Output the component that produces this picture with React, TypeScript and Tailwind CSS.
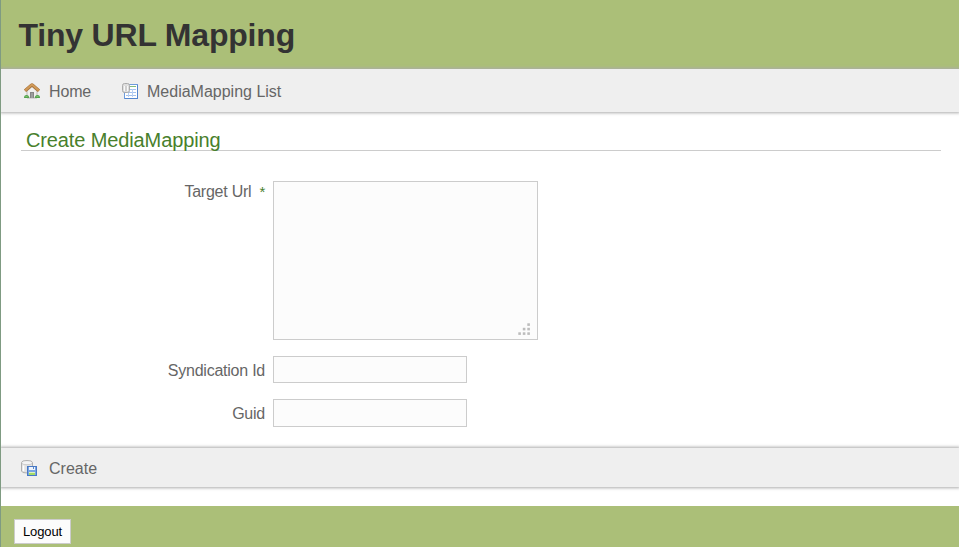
import type { ReactNode } from "react";

function HomeIcon() {
  return (
    <svg width="16" height="16" viewBox="0 0 16 16" className="mt-px shrink-0">
      <path d="M3 8L8 3.5L13 8V15H3Z" fill="#f0efed" stroke="#b0ada8" strokeWidth="0.8" />
      <rect x="6" y="9" width="4" height="6" fill="#858585" />
      <rect x="7" y="10" width="2" height="5" fill="#9d9d9d" />
      <path d="M1 7.8L7.4 2.2Q8 1.7 8.6 2.2L15 7.8" fill="none" stroke="#a8713a" strokeWidth="3.4" />
      <path d="M1.2 7.4L7.4 2Q8 1.5 8.6 2L14.8 7.4" fill="none" stroke="#d09a58" strokeWidth="2" />
      <path d="M0 15Q0 12 2.5 12Q5 12 5.3 15Z" fill="#55a34e" />
      <path d="M10.7 15Q11 12 13.5 12Q16 12 16 15Z" fill="#55a34e" />
      <path d="M1.5 13.5h2M12.5 13.5h2" stroke="#80c56e" />
    </svg>
  );
}

function TableIcon() {
  return (
    <svg width="16" height="16" viewBox="0 0 16 16" className="mt-px shrink-0">
      <rect x="2.5" y="1.5" width="13" height="14" fill="#fff" stroke="#6d9bdc" />
      <path d="M3 15.5H16M15.5 2V16" stroke="#5486cf" />
      <rect x="8" y="3" width="6" height="1" fill="#82bd7e" />
      <path d="M4 6.5H14M4 9.5H14M4 12.5H14" stroke="#a3c2ef" />
      <path d="M6.5 6V14M10.5 6V14" stroke="#b9d0f3" />
      <rect x="0.5" y="0.5" width="7" height="9" rx="2" fill="#dedede" stroke="#ababab" />
      <path d="M2.5 3V8M5.5 3V8" stroke="#f9f9f9" />
      <path d="M4 3V8" stroke="#c0c0c0" />
    </svg>
  );
}

function SaveIcon() {
  return (
    <svg width="16" height="16" viewBox="0 0 16 16" className="mt-px shrink-0">
      <path d="M0.5 2.5Q0.5 0.5 6 0.5Q11.5 0.5 11.5 2.5V11Q11.5 13 6 13Q0.5 13 0.5 11Z" fill="#e2e2e2" stroke="#b0b0b0" />
      <ellipse cx="6" cy="2.8" rx="4.8" ry="1.6" fill="#f4f4f4" />
      <path d="M1 3.5Q2 4.7 6 4.7Q10 4.7 11 3.5" fill="none" stroke="#c8c8c8" strokeWidth="0.8" />
      <path d="M2.5 5.5V11" stroke="#fff" strokeWidth="1.5" />
      <rect x="6.5" y="6.5" width="9" height="9" fill="#78a4e3" stroke="#4778c4" />
      <rect x="8" y="7" width="6" height="3" fill="#edf3fc" />
      <rect x="12" y="7" width="1" height="2" fill="#5b87c8" />
      <rect x="8" y="12" width="6" height="3" fill="#e0f1bd" />
      <rect x="8" y="13" width="6" height="2" fill="#a4dc66" />
    </svg>
  );
}

function Grip() {
  const dots = [[9, 0], [4.5, 4.5], [9, 4.5], [0, 9], [4.5, 9], [9, 9]];
  return (
    <svg width="12" height="12" viewBox="-0.3 -0.3 12 12" className="pointer-events-none absolute right-2 bottom-[5px]">
      {dots.map(([x, y]) => (
        <rect key={`${x}-${y}`} x={x} y={y} width="2.6" height="2.6" fill="#bdbdbd" />
      ))}
    </svg>
  );
}

function Label({ children }: { children: ReactNode }) {
  return <label className="w-[244px] shrink-0 pt-px text-right leading-5 tracking-[-0.24px]">{children}</label>;
}

export default function App() {
  return (
    <div className="h-[547px] w-full overflow-hidden border-l border-[#7f9b82] bg-white font-['Liberation_Sans',Arial,sans-serif] text-base text-[#666]">
      <header className="h-[69px] bg-[#abbf78] pt-[15px] pl-[17.5px]">
        <h1 className="text-[32px] leading-10 font-bold tracking-[-0.2px] text-[#333]">Tiny URL Mapping</h1>
      </header>
      <nav className="relative flex h-[43px] items-center bg-[#efefef] pl-[23px] shadow-[0_0_3px_1px_#aaaaaa]">
        <a className="flex w-[98px] items-center gap-[9px]">
          <HomeIcon />
          <span className="pt-0.5 tracking-[-0.15px]">Home</span>
        </a>
        <a className="flex items-center gap-[9px]">
          <TableIcon />
          <span className="pt-0.5">MediaMapping List</span>
        </a>
      </nav>
      <main>
        <h2 className="mt-[17px] mr-[18px] ml-5 h-[22px] border-b border-[#ccc] pl-[5px] text-[20px] leading-[23px] tracking-[-0.12px] text-[#48802c]">
          Create MediaMapping
        </h2>
        <form className="h-[297px] pt-[30px] pl-5">
          <div className="flex gap-2">
            <Label>
              Target Url<span className="ml-2 inline-block text-[15px] leading-4 text-[#48802c]">*</span>
            </Label>
            <div className="relative h-[159px] w-[265px]">
              <textarea className="block h-full w-full resize-none border border-[#ccc] bg-[#fcfcfc]" />
              <Grip />
            </div>
          </div>
          <div className="mt-4 flex gap-2 [&>label]:pt-[5px]">
            <Label>Syndication Id</Label>
            <input className="h-[27px] w-[194px] border border-[#ccc] bg-[#fcfcfc]" />
          </div>
          <div className="mt-4 flex gap-2 [&>label]:pt-[5px]">
            <Label>Guid</Label>
            <input className="h-7 w-[194px] border border-[#ccc] bg-[#fcfcfc]" />
          </div>
        </form>
        <div className="flex h-[39px] items-center gap-3 bg-[#efefef] pl-5 shadow-[0_0_3px_1px_#aaaaaa]">
          <SaveIcon />
          <span className="pt-0.5">Create</span>
        </div>
      </main>
      <footer className="mt-[19px] h-[41px] bg-[#abbf78] pt-[13px] pl-[13px]">
        <button className="h-[25px] w-[57px] border border-[#ccc] bg-[#fcfcfc] text-[13px] leading-[23px] tracking-[-0.1px] text-black">Logout</button>
      </footer>
    </div>
  );
}
